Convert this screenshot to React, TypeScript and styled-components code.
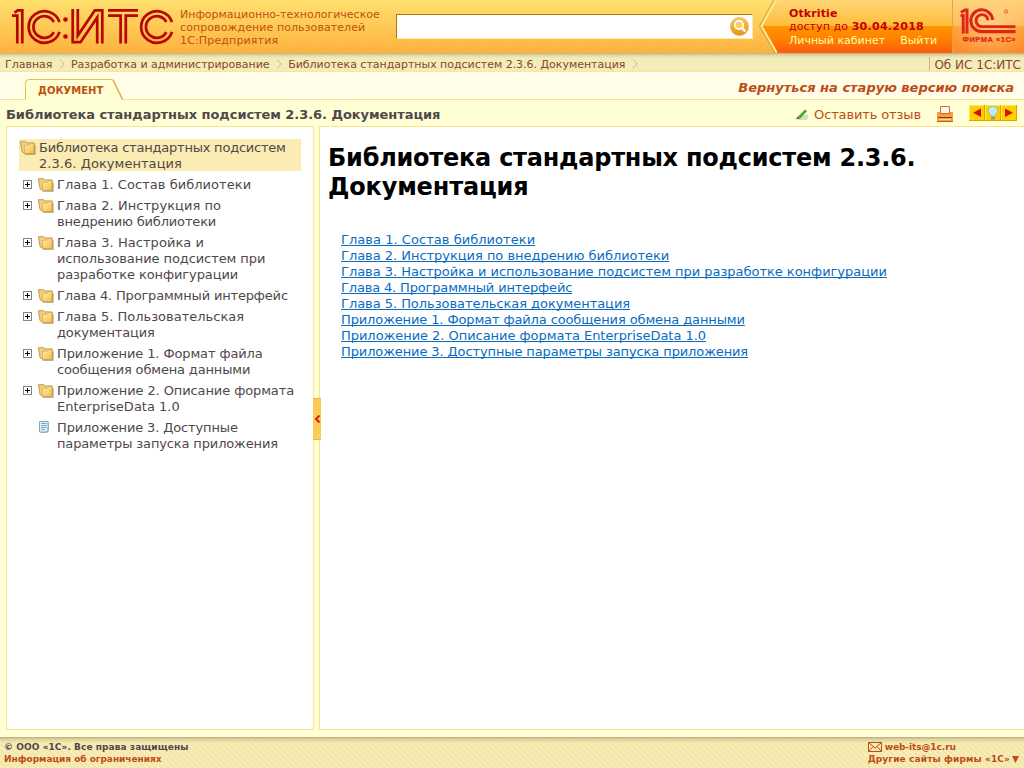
import React from "react";
import styled, { createGlobalStyle } from "styled-components";

const GlobalStyle = createGlobalStyle`
  * { box-sizing: border-box; }
  html, body { margin: 0; padding: 0; overflow: hidden; }
  body {
    font-family: Verdana, "DejaVu Sans", sans-serif;
    font-size: 13px;
    color: #50484a;
    background: #ffffd6;
  }
  a { color: inherit; text-decoration: none; white-space: nowrap; }
`;

const Page = styled.div`
  display: flex;
  flex-direction: column;
  width: 1024px;
  height: 768px;
  overflow: hidden;
`;

const Header = styled.header`
  display: flex;
  flex: none;
  height: 53px;
  background:
    repeating-linear-gradient(135deg, rgba(255, 255, 255, 0.06) 0 1.4px, transparent 1.4px 4.24px),
    linear-gradient(#ffdf6b, #fdb13a);
`;

const LogoBox = styled.a`
  flex: none;
  width: 180px;
  height: 53px;
  svg { display: block; }
`;

const Slogan = styled.div`
  flex: none;
  width: 216px;
  padding-top: 8px;
  font-size: 11px;
  line-height: 13px;
  color: #c0500f;
  white-space: nowrap;
`;

const Line = styled.div<{ $ls?: number }>`
  letter-spacing: ${(p) => p.$ls ?? 0}px;
`;

const AccessDate = styled.b`
  letter-spacing: 0.28px;
`;

const SearchBox = styled.div`
  display: flex;
  flex: none;
  justify-content: flex-end;
  align-items: center;
  width: 357px;
  height: 25px;
  margin: 14px 6px 0 0;
  padding-right: 3px;
  background: #fff;
  border-top: 1px solid #a87813;
  border-left: 1px solid #a87813;
  border-right: 1px solid #ffe9a0;
  border-bottom: 1px solid #ffe9a0;
`;

const Account = styled.div`
  display: flex;
  flex: 1;
  height: 53px;
`;

const Chevron = styled.svg`
  display: block;
  flex: none;
`;

const AccountInfo = styled.div`
  flex: none;
  width: 175px;
  padding: 7px 0 0 12px;
  font-size: 11px;
  line-height: 13px;
  color: #c40000;
  white-space: nowrap;
  background: linear-gradient(#ffd676 0, #ffbd3b 26px, #ff9500 26px, #ff8300 38px, #ff5a0c 53px);
`;

const AccountLinks = styled.div`
  display: flex;
  gap: 15px;
  margin-top: 1px;
  color: #ffff9e;
`;

const FirmBox = styled.div`
  flex: 1;
  border-left: 1px solid #efa13b;
  background:
    radial-gradient(ellipse 42px 30px at 50% 50%, rgba(255, 220, 160, 0.6), transparent),
    linear-gradient(#ffd27a 0, #ffb855 26px, #ff9c28 26px, #ff8a30 53px);
  svg { display: block; }
`;

const Crumbs = styled.nav`
  display: flex;
  flex: none;
  align-items: center;
  height: 19px;
  padding: 3px 3px 0 5px;
  font-size: 11px;
  color: #884537;
  border-bottom: 1px solid #fde49a;
  background:
    linear-gradient(#b9b083 0, rgba(205, 196, 146, 0.55) 2px, transparent 5px),
    repeating-linear-gradient(45deg, rgba(190, 176, 110, 0.11) 0 1.4px, transparent 1.4px 2.83px),
    #f6f0bc;
`;

const Crumb = styled.a`
  padding-top: 2px;
  line-height: 13px;
  letter-spacing: -0.02px;
`;

const CrumbArrow = styled.svg`
  flex: none;
  margin: 0 6px 0 6.6px;
`;

const About = styled.a`
  margin-left: auto;
  height: 14px;
  padding-left: 4px;
  font-size: 12px;
  line-height: 16px;
  border-left: 1px solid #bdb793;
`;

const TabStrip = styled.div`
  display: flex;
  flex: none;
  justify-content: space-between;
  height: 28px;
  padding: 0 10px 0 24px;
  background: #fffce8;
  border-bottom: 1px solid #fde18c;
`;

const Tab = styled.div`
  display: grid;
  flex: none;
  width: 100px;
  height: 28px;
  > * { grid-area: 1 / 1; }
`;

const TabLabel = styled.span`
  padding: 12px 0 0 14px;
  font-size: 10px;
  line-height: 14px;
  font-weight: bold;
  color: #c0500f;
`;

const OldVersion = styled.a`
  padding-top: 8px;
  font-size: 13px;
  line-height: 16px;
  font-weight: bold;
  font-style: italic;
  color: #bd4c14;
`;

const TitleBar = styled.div`
  display: flex;
  flex: none;
  align-items: center;
  height: 26px;
  padding: 2px 7px 0 6px;
`;

const DocTitle = styled.strong`
  flex: 1;
  letter-spacing: -0.06px;
  color: #50484a;
  white-space: nowrap;
`;

const Feedback = styled.a`
  display: flex;
  gap: 5px;
  align-items: center;
  margin-right: 16px;
  letter-spacing: -0.13px;
  color: #bd4c14;
`;

const Pager = styled.svg`
  flex: none;
  margin: -3px 0 0 16px;
`;

const PrintIcon = styled.svg`
  flex: none;
  margin-top: -1px;
`;

const Main = styled.main`
  display: flex;
  flex: none;
  height: 604px;
  margin: 0 0 7px 6px;
`;

const TreePanel = styled.aside`
  flex: none;
  width: 308px;
  padding: 12px;
  border: 1px solid #fde18c;
  background: #fff;
`;

const Splitter = styled.div`
  flex: none;
  width: 5px;
  padding-top: 272px;
`;

const Handle = styled.div`
  position: relative;
  z-index: 1;
  display: flex;
  align-items: center;
  width: 8px;
  height: 42px;
  margin-left: -1px;
  border-top: 1px solid #f0b53c;
  border-bottom: 1px solid #f0b53c;
  background: repeating-linear-gradient(135deg, #ffd768 0 1.4px, #fdc650 1.4px 2.83px);
`;

const Tree = styled.div`
  display: flex;
  flex-direction: column;
  gap: 5px;
`;

const TreeRow = styled.div<{ $root?: boolean }>`
  display: flex;
  width: 282px;
  padding-left: ${(p) => (p.$root ? 0 : 4)}px;
  background: ${(p) => (p.$root ? "#faecb2" : "transparent")};
`;

const ExpandSlot = styled.span`
  flex: none;
  width: 14px;
  padding-top: 4px;
  svg { display: block; }
`;

const IconSlot = styled.span`
  flex: none;
  width: 20px;
  padding-top: 1px;
  svg { display: block; }
`;

const Label = styled.a<{ $ls?: number }>`
  display: block;
  height: 16px;
  line-height: 18px;
  letter-spacing: ${(p) => p.$ls ?? 0}px;
`;

const Content = styled.section`
  flex: 1;
  padding: 17px 0 0 8px;
  background: #fff;
  border: 1px solid #fde18c;
  border-right: 0;
`;

const Heading = styled.h1`
  margin: 0 0 30px;
  font-size: 24px;
  line-height: 29px;
  color: #000;
  white-space: nowrap;
`;

const Links = styled.div`
  display: flex;
  flex-direction: column;
  align-items: flex-start;
  padding-left: 13px;
`;

const DocLink = styled.a<{ $ls: number }>`
  line-height: 16px;
  letter-spacing: ${(p) => p.$ls}px;
  color: #0a6cc0;
  text-decoration: underline;
  text-decoration-skip-ink: none;
  text-decoration-thickness: 1px;
  text-underline-offset: 1px;
`;

const Footer = styled.footer`
  display: flex;
  flex: 1;
  justify-content: space-between;
  padding: 4px 5px 0 4px;
  font-size: 9px;
  line-height: 12px;
  font-weight: bold;
  white-space: nowrap;
  background:
    linear-gradient(#b9a987 0, rgba(200, 184, 128, 0.5) 2px, transparent 6px),
    repeating-linear-gradient(45deg, rgba(190, 166, 100, 0.1) 0 1.4px, transparent 1.4px 4.24px),
    #f6ecb4;
`;

const FooterLink = styled.a<{ $ls?: number }>`
  display: flex;
  align-items: center;
  gap: 2px;
  height: 12px;
  letter-spacing: ${(p) => p.$ls ?? 0}px;
  color: #bd4c14;
`;

const ItsLogo = () => (
  <svg width="180" height="53" fill="none" stroke="#b90504" strokeWidth="2.7">
    <path d="M12 15.7H17.3V43.5M14.5 12.7L17.8 10.4H22.3V43.5" />
    <path d="M59.5 22.2A15.8 15.8 0 1 0 59.5 31.8M53.8 22A10.8 10.8 0 1 0 53.8 32" />
    <circle cx="65.5" cy="19.5" r="2.3" fill="#b90504" stroke="none" />
    <circle cx="65.5" cy="36.5" r="2.3" fill="#b90504" stroke="none" />
    <path d="M72.7 9V42.2H80.5L97.2 17.5V43.5M77.8 9V35.5L94.8 10.4H102.3V43.5" />
    <path d="M108 10.4H138M108 15.6H120.6V43.5M138 15.6H125.8V43.5" />
    <path d="M172 22.2A15.8 15.8 0 1 0 172 31.8M166.3 22A10.8 10.8 0 1 0 166.3 32" />
  </svg>
);

const SearchIcon = () => (
  <svg width="19" height="19" viewBox="0 0 19 19">
    <defs>
      <linearGradient id="lens" x2="0" y2="1">
        <stop stopColor="#f9cb58" />
        <stop offset="1" stopColor="#e6960f" />
      </linearGradient>
    </defs>
    <circle cx="9.5" cy="9.5" r="9.1" fill="url(#lens)" stroke="#edb04b" strokeWidth=".7" />
    <circle cx="9" cy="8" r="4.2" fill="#f6cc6d" stroke="#fff" strokeWidth="1.8" />
    <path d="M12 11L15.3 14.5" stroke="#fff" strokeWidth="2.4" />
  </svg>
);

const FirmLogo = () => (
  <svg width="71" height="53" fill="none" stroke="#dc2618" strokeWidth="3.1">
    <path d="M7.5 15.6H10.2V33.5M8 12.6L12 9.9H14V33.5" strokeWidth="3" />
    <path d="M39.6 20A10.9 10.9 0 1 0 29 31.6H62.5" />
    <path d="M35 20.3A6 6 0 1 0 29.3 26.6H62.5" strokeWidth="2.9" />
    <circle cx="53" cy="11.5" r="1.6" strokeWidth=".7" />
    <text x="9.5" y="42" textLength="53" fill="#dc2618" stroke="#dc2618" strokeWidth=".2" fontFamily="Liberation Sans, sans-serif" fontSize="7.5" fontWeight="bold">ФИРМА «1С»</text>
  </svg>
);

const FolderIcon = () => (
  <svg width="17" height="15" viewBox="-.5 -.5 16 14">
    <defs>
      <linearGradient id="folder" x2=".8" y2="1">
        <stop stopColor="#fff0b4" />
        <stop offset="1" stopColor="#f6c14a" />
      </linearGradient>
    </defs>
    <path d="M5 4.5H15.2V13.5H5Z" fill="#8f8371" opacity=".65" />
    <path d="M.8 1L5.5 1L7 2.2H13.8V12H5L2.4 10.5Z" fill="#f3cf7c" stroke="#b98c46" strokeWidth=".8" />
    <path d="M4.6 4.6L9.5 4.2L10.5 2.8H13.6V12.2H4.8Z" fill="url(#folder)" stroke="#d69f3a" strokeWidth=".6" />
  </svg>
);

const PageIcon = () => (
  <svg width="14" height="14" viewBox="0 0 14 14">
    <path d="M3.5 2H12V11L10 13H3.5Z" fill="#a9b7c0" />
    <path d="M2.5 1.5H11V10L9 12H2.5Z" fill="#e3f1f8" stroke="#86a5ba" />
    <path d="M4 3.5H9.5M4 5.5H9.5M4 7.5H9.5M4 9.5H8" stroke="#79a5c4" />
  </svg>
);

const PlusBox = () => (
  <svg width="9" height="9" shapeRendering="crispEdges">
    <rect x=".5" y=".5" width="8" height="8" fill="#fff" stroke="#858585" />
    <path d="M2 4.5H7M4.5 2V7" stroke="#000" />
  </svg>
);

const CrumbSeparator = () => (
  <CrumbArrow width="6" height="10">
    <path d="M1 .5L5 5L1 9.5" fill="none" stroke="#c9bf9c" />
  </CrumbArrow>
);

type TextLine = [text: string, spacing: number];

const tree: { lines: TextLine[]; leaf?: boolean }[] = [
  { lines: [["Глава 1. Состав библиотеки", 0.04]] },
  { lines: [["Глава 2. Инструкция по", 0.05], ["внедрению библиотеки", -0.17]] },
  { lines: [["Глава 3. Настройка и", 0.05], ["использование подсистем при", -0.08], ["разработке конфигурации", -0.09]] },
  { lines: [["Глава 4. Программный интерфейс", -0.17]] },
  { lines: [["Глава 5. Пользовательская", 0], ["документация", -0.15]] },
  { lines: [["Приложение 1. Формат файла", -0.12], ["сообщения обмена данными", -0.16]] },
  { lines: [["Приложение 2. Описание формата", -0.1], ["EnterpriseData 1.0", 0]] },
  { lines: [["Приложение 3. Доступные", -0.13], ["параметры запуска приложения", -0.14]], leaf: true },
];

const links: TextLine[] = [
  ["Глава 1. Состав библиотеки", 0.04],
  ["Глава 2. Инструкция по внедрению библиотеки", -0.03],
  ["Глава 3. Настройка и использование подсистем при разработке конфигурации", -0.03],
  ["Глава 4. Программный интерфейс", -0.16],
  ["Глава 5. Пользовательская документация", -0.04],
  ["Приложение 1. Формат файла сообщения обмена данными", -0.12],
  ["Приложение 2. Описание формата EnterpriseData 1.0", -0.04],
  ["Приложение 3. Доступные параметры запуска приложения", -0.11],
];

export default function App() {
  return (
    <Page>
      <GlobalStyle />
      <Header>
        <LogoBox><ItsLogo /></LogoBox>
        <Slogan>
          <Line>Информационно-технологическое</Line>
          <Line $ls={0.08}>сопровождение пользователей</Line>
          <Line $ls={0.15}>1С:Предприятия</Line>
        </Slogan>
        <SearchBox><SearchIcon /></SearchBox>
        <Account>
          <Chevron width="18" height="53">
            <defs>
              <linearGradient id="tip" x2="0" y2="1">
                <stop stopColor="#ffd676" />
                <stop offset=".49" stopColor="#ffbd3b" />
                <stop offset=".49" stopColor="#ff9500" />
                <stop offset=".72" stopColor="#ff8300" />
                <stop offset="1" stopColor="#ff5a0c" />
              </linearGradient>
            </defs>
            <path d="M18 0L2 26L18 53Z" fill="url(#tip)" />
            <path d="M15 0L.5 26L16 53" fill="none" stroke="#c49a42" />
            <path d="M17 0L2.5 26L18 53" fill="none" stroke="#ffe88a" strokeWidth="2" />
          </Chevron>
          <AccountInfo>
            <Line $ls={0.12}><b>Otkritie</b></Line>
            <Line $ls={0.08}>доступ до <AccessDate>30.04.2018</AccessDate></Line>
            <AccountLinks>
              <a>Личный кабинет</a>
              <a>Выйти</a>
            </AccountLinks>
          </AccountInfo>
          <FirmBox><FirmLogo /></FirmBox>
        </Account>
      </Header>
      <Crumbs>
        <Crumb>Главная</Crumb>
        <CrumbSeparator />
        <Crumb>Разработка и администрирование</Crumb>
        <CrumbSeparator />
        <Crumb>Библиотека стандартных подсистем 2.3.6. Документация</Crumb>
        <CrumbSeparator />
        <About>Об ИС 1С:ИТС</About>
      </Crumbs>
      <TabStrip>
        <Tab>
          <svg width="100" height="28">
            <path d="M1.5 28V11Q1.5 7.5 5 7.5H88.5L98.5 28Z" fill="#ffffd6" />
            <path d="M1.5 28V11Q1.5 7.5 5 7.5H88.5L98.5 28" fill="none" stroke="#efbd4c" />
            <path d="M89 8L98.5 27" stroke="#ddb055" strokeWidth="1.4" />
          </svg>
          <TabLabel>ДОКУМЕНТ</TabLabel>
        </Tab>
        <OldVersion>Вернуться на старую версию поиска</OldVersion>
      </TabStrip>
      <TitleBar>
        <DocTitle>Библиотека стандартных подсистем 2.3.6. Документация</DocTitle>
        <Feedback>
          <svg width="14" height="13">
            <path d="M2 9L12 6.5L13.5 8L12 12H3Z" fill="#c9ceb0" opacity=".7" />
            <path d="M3 8.5L10 1.5L12.2 3L5.5 10.3Z" fill="#4fa83f" />
            <path d="M.8 11.3L2.8 8.3L5.4 10.4Z" fill="#56665c" />
          </svg>
          <span>Оставить отзыв</span>
        </Feedback>
        <PrintIcon width="16" height="16">
          <path d="M3.5 .5H12.5V8H3.5Z" fill="#fff8ee" stroke="#d9603c" />
          <path d="M0 6H3V8H13V6H16V16H0Z" fill="#f7a13a" />
          <path d="M3 7.5H13" stroke="#e2622c" />
          <path d="M1 11.5H15" stroke="#8a3a1e" />
          <path d="M2 13.5H14" stroke="#ffd89c" />
          <path d="M0 15.5H16" stroke="#c75820" />
        </PrintIcon>
        <Pager width="48" height="16">
          <path d="M0 0H48V16H0Z" fill="#ffd000" />
          <path d="M.5 15V.5H15M16.5 15V.5H31M32.5 15V.5H47" fill="none" stroke="#ffe75d" />
          <path d="M0 15.5H15.5V0M16 15.5H31.5V0M32 15.5H47.5V0" fill="none" stroke="#e6a100" />
          <path d="M12 3.5V12L4 7.7Z" fill="#cf1212" />
          <path d="M36 3.5V12L44 7.7Z" fill="#cf1212" />
          <path d="M21.5 9.3C16.7 5 20.5 1.5 24 1.5S31 5 26.5 9.3V11H21.5Z" fill="#c5e8f5" stroke="#80aaba" strokeWidth=".6" />
          <path d="M22 12H26V14.5H22Z" fill="#8198a2" />
        </Pager>
      </TitleBar>
      <Main>
        <TreePanel>
          <Tree>
            <TreeRow $root>
              <IconSlot><FolderIcon /></IconSlot>
              <div>
                <Label $ls={-0.22}>Библиотека стандартных подсистем</Label>
                <Label $ls={0.05}>2.3.6. Документация</Label>
              </div>
            </TreeRow>
            {tree.map((node) => (
              <TreeRow key={node.lines[0][0]}>
                <ExpandSlot>{!node.leaf && <PlusBox />}</ExpandSlot>
                <IconSlot>{node.leaf ? <PageIcon /> : <FolderIcon />}</IconSlot>
                <div>
                  {node.lines.map(([text, spacing]) => <Label key={text} $ls={spacing}>{text}</Label>)}
                </div>
              </TreeRow>
            ))}
          </Tree>
        </TreePanel>
        <Splitter>
          <Handle>
            <svg width="8" height="8"><path d="M6.5 .5L3 4L6.5 7.5" fill="none" stroke="#dc1616" strokeWidth="2" /></svg>
          </Handle>
        </Splitter>
        <Content>
          <Heading>
            <Line $ls={-0.24}>Библиотека стандартных подсистем 2.3.6.</Line>
            <Line $ls={-0.16}>Документация</Line>
          </Heading>
          <Links>
            {links.map(([text, spacing]) => <DocLink key={text} $ls={spacing}>{text}</DocLink>)}
          </Links>
        </Content>
      </Main>
      <Footer>
        <div>
          <Line $ls={0.07}>© ООО «1С». Все права защищены</Line>
          <FooterLink $ls={-0.04}>Информация об ограничениях</FooterLink>
        </div>
        <div>
          <FooterLink $ls={-0.08}>
            <svg width="15" height="11" fill="none" stroke="#bd4c14">
              <path d="M.5 .5H13.5V9.5H.5ZM.5 .5L7 6L13.5 .5M.5 9.5L5 4.5M13.5 9.5L9 4.5" />
            </svg>
            web-its@1c.ru
          </FooterLink>
          <FooterLink $ls={0.12}>
            Другие сайты фирмы «1С»
            <svg width="7" height="7"><path d="M0 0H7L3.5 7Z" fill="#bd4c14" /></svg>
          </FooterLink>
        </div>
      </Footer>
    </Page>
  );
}
